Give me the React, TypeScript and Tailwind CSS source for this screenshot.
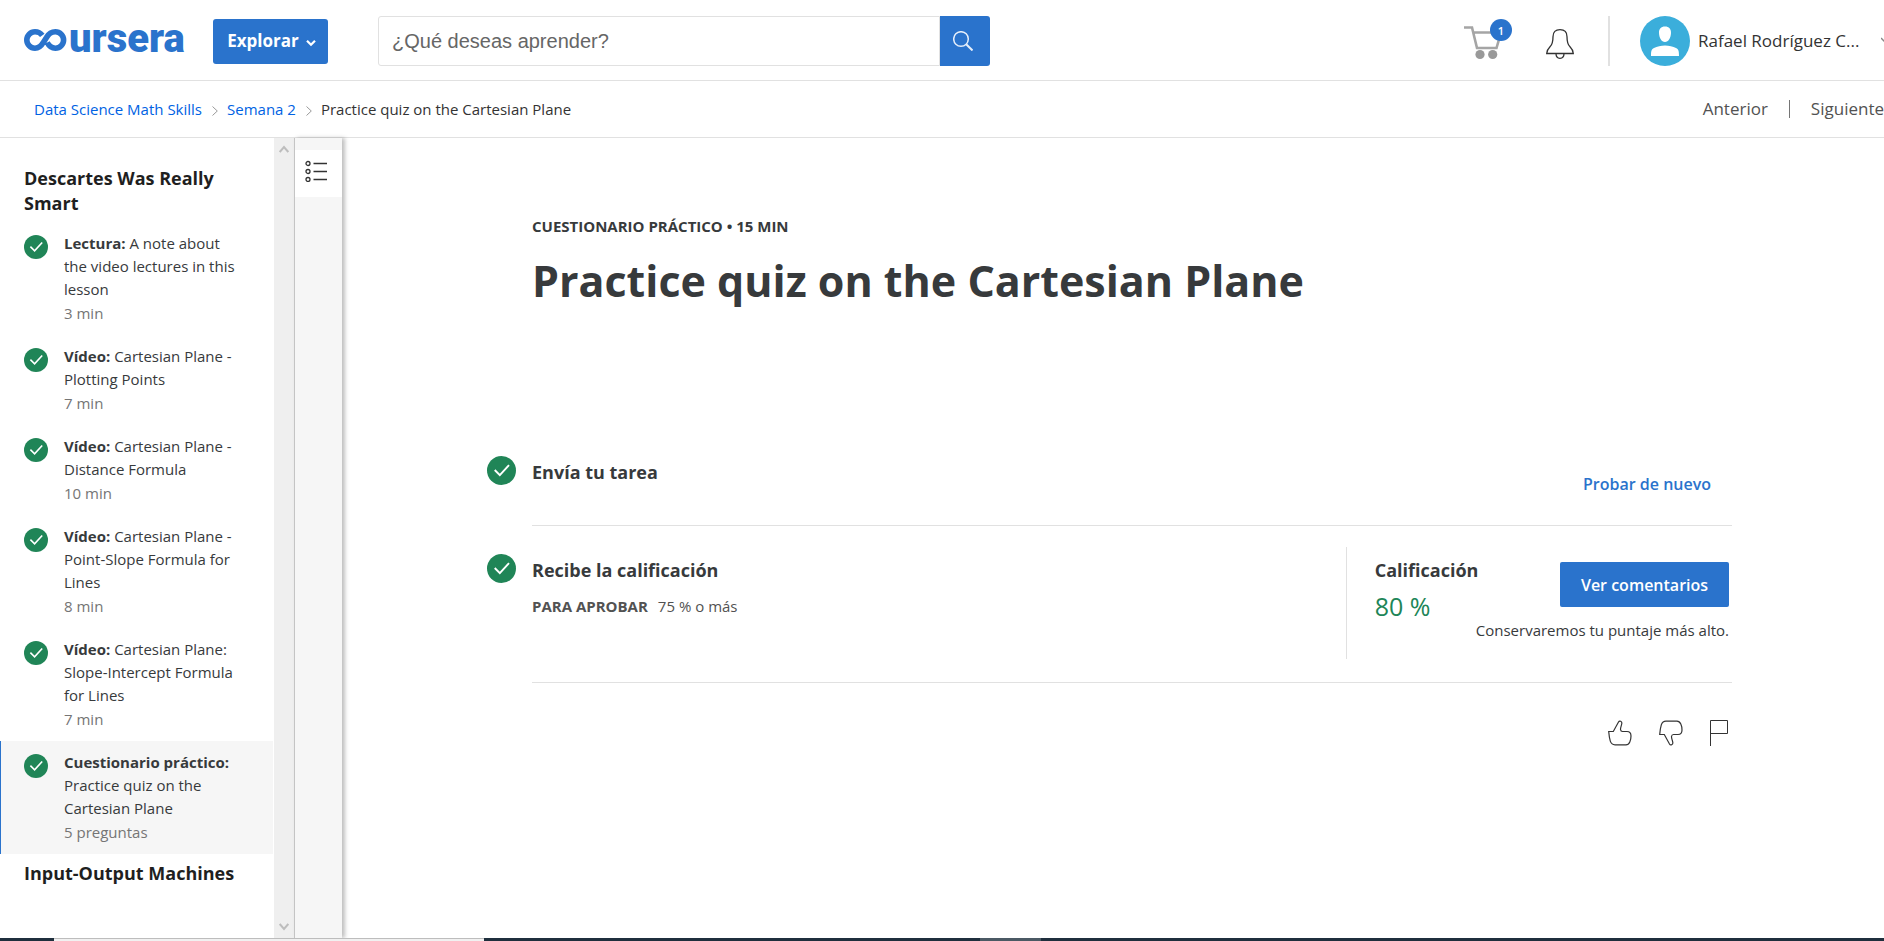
import React from "react";

type Lesson = { kind: string; title: string; meta: string; active?: boolean };

const lessons: Lesson[] = [
  { kind: "Lectura:", title: "A note about the video lectures in this lesson", meta: "3 min" },
  { kind: "Vídeo:", title: "Cartesian Plane - Plotting Points", meta: "7 min" },
  { kind: "Vídeo:", title: "Cartesian Plane - Distance Formula", meta: "10 min" },
  { kind: "Vídeo:", title: "Cartesian Plane - Point-Slope Formula for Lines", meta: "8 min" },
  { kind: "Vídeo:", title: "Cartesian Plane: Slope-Intercept Formula for Lines", meta: "7 min" },
  { kind: "Cuestionario práctico:", title: "Practice quiz on the Cartesian Plane", meta: "5 preguntas", active: true },
];

function Check({ className }: { className: string }) {
  return (
    <svg viewBox="0 0 24 24" className={className} aria-hidden="true">
      <circle cx="12" cy="12" r="12" fill="#208557" />
      <path d="M6.4 11.6l4.2 4.2 7.6-8.3" fill="none" stroke="#fff" strokeWidth="1.6" />
    </svg>
  );
}

function Logo() {
  return (
    <a href="#inicio" aria-label="Coursera" className="mb-[2px] flex h-10 w-[159px] shrink-0 items-center text-[#2a73cc]">
      <svg viewBox="0 0 45 22" className="h-[22px] w-[45px] shrink-0" aria-hidden="true">
        <path
          d="M18.300 6.400C16.500 4 14 2.800 11 2.800a8.200 8.200 0 0 0 0 16.400c4 0 6.300-2.200 8.500-6L22.500 8.500c2.100-3.700 4.800-5.700 8.900-5.700a8.200 8.200 0 0 1 0 16.400c-3.700 0-6.400-2-8.200-5.600"
          fill="none"
          stroke="currentColor"
          strokeWidth="5.600"
        />
      </svg>
      <span className="pb-[2px] font-['Roboto',sans-serif] text-[40px] leading-10 font-black">ursera</span>
    </a>
  );
}

function Header() {
  return (
    <header className="flex h-[81px] shrink-0 items-center border-b border-[#e1e1e1] pt-[2px] pl-6">
      <Logo />
      <button className="ml-[30px] flex h-[45px] w-[115px] shrink-0 items-center justify-center gap-[7px] rounded-[3px] bg-[#2a73cc] pl-[2px] text-[17px] font-bold text-white">
        Explorar
        <svg viewBox="0 0 10 8" className="mt-1 h-2 w-2.5" aria-hidden="true">
          <path d="M1 1.800l4 4 4-4" fill="none" stroke="currentColor" strokeWidth="2.200" />
        </svg>
      </button>
      <form className="ml-[50px] flex h-[50px] w-[612px] items-stretch" onSubmit={(e) => e.preventDefault()}>
        <input
          aria-label="Buscar cursos"
          placeholder="¿Qué deseas aprender?"
          className="min-w-0 flex-1 rounded-l-[3px] border border-[#e1e1e1] px-[13px] font-['Liberation_Sans',sans-serif] text-[20px] text-[#666] outline-none placeholder:text-[#666]"
        />
        <button aria-label="Buscar" className="flex w-[50px] items-center justify-center rounded-r-[3px] bg-[#2a73cc] text-[#e5eefa]">
          <svg viewBox="0 0 20 20" className="-ml-1 h-5 w-5" fill="none" stroke="currentColor" strokeWidth="1.500" aria-hidden="true">
            <circle cx="8" cy="8" r="7.300" />
            <path d="M13.200 13.200l6.300 6.300" strokeWidth="2" />
          </svg>
        </button>
      </form>
      <div className="ml-auto flex shrink-0 items-center">
        <a href="#carrito" aria-label="Carrito" className="relative block h-10 w-12">
          <svg viewBox="0 1 48 40" className="h-10 w-12" aria-hidden="true">
            <path d="M0 7.500h8l5 20.500h19.500l4.500-15.500H9" fill="none" stroke="#a5a5a5" strokeWidth="2.600" />
            <circle cx="16" cy="34.500" r="4.600" fill="#999" />
            <circle cx="28.700" cy="34.500" r="4.600" fill="#999" />
          </svg>
          <span className="absolute top-[-2px] right-0 flex h-[22px] w-[22px] items-center justify-center rounded-full bg-[#2a73cc] text-[11px] leading-none font-semibold text-white">
            1
          </span>
        </a>
        <button aria-label="Notificaciones" className="ml-[34px]">
          <svg viewBox="0 1 28 32" className="mt-2 h-8 w-7" fill="none" stroke="#333" strokeWidth="1.300" aria-hidden="true">
            <path d="M14 1.700c-4.500 0-7 2.600-7 7 0 4.500-.7 7.800-3 10.100C1.800 21 .7 22 .7 25.500h26.600c0-3.500-1.100-4.500-3.300-6.700-2.300-2.300-3-5.600-3-10.100 0-4.400-2.500-7-7-7z" />
            <path d="M10 25.500c0 3 1.500 4.800 4 4.800s4-1.800 4-4.800" />
          </svg>
        </button>
        <span className="ml-[34px] h-[50px] w-[2px] bg-[#e1e1e1]" />
        <button className="ml-[30px] flex items-center text-[17px] text-[#333]">
          <svg viewBox="0 0 50 50" className="h-[50px] w-[50px]" aria-hidden="true">
            <circle cx="25" cy="25" r="25" fill="#3baedb" />
            <path d="M25 10.500c4 0 6.200 2.600 6 6.500-.2 4.700-2.500 9-6 9s-5.800-4.300-6-9c-.2-3.900 2-6.500 6-6.500z" fill="#fff" />
            <path d="M11 40c0-5 .5-7 3-8 3-1.300 7-2.500 11-2.500s8 1.200 11 2.500c2.500 1 3 3 3 8z" fill="#fff" />
          </svg>
          <span className="ml-2 w-[183px] truncate text-left">Rafael Rodríguez C...</span>
          <span className="flex w-[3px] overflow-hidden">
            <svg viewBox="0 0 12 8" className="h-2 w-3 shrink-0" fill="none" stroke="#888" strokeWidth="1.500" aria-hidden="true">
              <path d="M0 1l6 6 6-6" />
            </svg>
          </span>
        </button>
      </div>
    </header>
  );
}

function Separator() {
  return (
    <svg viewBox="0 0 6 10" className="mr-[9px] ml-[10px] mt-1 h-[10px] w-[6px]" fill="none" stroke="#999" aria-hidden="true">
      <path d="M.5.500L5.300 5 .5 9.500" />
    </svg>
  );
}

function Breadcrumbs() {
  return (
    <div className="flex h-[57px] shrink-0 items-center justify-between border-b border-[#e1e1e1] pl-[34px]">
      <nav aria-label="Ruta" className="flex items-center text-[15px] text-[#333]">
        <a href="#curso" className="text-[#0062e3]">Data Science Math Skills</a>
        <Separator />
        <a href="#semana" className="text-[#0062e3]">Semana 2</a>
        <Separator />
        <span>Practice quiz on the Cartesian Plane</span>
      </nav>
      <nav aria-label="Navegación" className="flex items-center text-[17px] text-[#525252]">
        <a href="#anterior">Anterior</a>
        <span className="mx-[21px] h-[18px] w-px bg-[#757575]" />
        <a href="#siguiente">Siguiente</a>
      </nav>
    </div>
  );
}

function Sidebar() {
  return (
    <aside className="flex shrink-0">
      <div className="w-[274px] pt-7 pr-px">
        <h2 className="px-6 text-[18px] leading-[25px] font-bold text-[#1f1f1f]">Descartes Was Really Smart</h2>
        <ul className="mt-[6px]">
          {lessons.map((l) => (
            <li key={l.title}>
              <a
                href="#leccion"
                className={
                  l.active
                    ? "flex border-l border-[#2a73cc] bg-[#f6f6f6] pt-[10px] pr-8 pb-[11px] pl-[23px]"
                    : "flex border-l border-transparent pt-[10px] pr-8 pb-[11px] pl-[23px]"
                }
              >
                <Check className="mt-[3px] h-6 w-6 shrink-0" />
                <div className="ml-4 text-[15px]">
                  <p className="leading-[23px] text-[#373a3c]">
                    <strong className="font-bold">{l.kind}</strong> {l.title}
                  </p>
                  <p className="mt-px leading-[22px] text-[#757575]">{l.meta}</p>
                </div>
              </a>
            </li>
          ))}
        </ul>
        <h2 className="mt-[7px] px-6 text-[18px] leading-[25px] font-bold text-[#1f1f1f]">Input-Output Machines</h2>
      </div>
      <div className="flex w-[20px] flex-col items-center justify-between bg-[#efefef] py-[7px]">
        <svg viewBox="0 0 10 8" className="h-2 w-2.5" fill="none" stroke="#bdbdbd" strokeWidth="2" aria-hidden="true">
          <path d="M.7 7L5 2l4.300 5" />
        </svg>
        <svg viewBox="0 0 10 8" className="h-2 w-2.5" fill="none" stroke="#bdbdbd" strokeWidth="2" aria-hidden="true">
          <path d="M.7 1L5 6l4.300-5" />
        </svg>
      </div>
      <div className="w-[48px] border-l border-[#c4c4c4] bg-[#f6f6f6] pt-3 shadow-[3px_0_4px_rgba(0,0,0,0.25)]">
        <button aria-label="Mostrar lecciones" className="flex h-[47px] w-full items-center bg-white pl-[10px]">
          <svg viewBox="0 0 22 22" className="mb-[5px] h-[22px] w-[22px]" fill="none" stroke="#333" strokeWidth="1.300" aria-hidden="true">
            <circle cx="3" cy="3.500" r="2" />
            <circle cx="3" cy="11.500" r="2" />
            <circle cx="3" cy="19.500" r="2" />
            <path d="M8.500 3.500H22M8.500 11.500H22M8.500 19.500H22" />
          </svg>
        </button>
      </div>
    </aside>
  );
}

const thumb = "M.700 11.500h4.600L10.500 2c1-1.700 3.700-.7 3.300 1.500-.3 2-1.500 4.500-1.300 6 .2 1.500 1 2 2 2h4.500c2.500 0 4 2 4 4.500 0 4-1.500 8.800-5 8.800H7c-2.500 0-4-1.700-4.700-3.700C1.500 18.500 1 15 .700 11.500z";

function Main() {
  return (
    <main className="min-w-0 flex-1 pr-[152px] pl-[145px] text-[#373a3c]">
      <div className="pt-[76px] pl-[45px]">
        <p className="text-[15px] leading-6 font-bold">CUESTIONARIO PRÁCTICO • 15 MIN</p>
        <h1 className="mt-[13px] text-[43px] leading-[60px] font-bold">Practice quiz on the Cartesian Plane</h1>
      </div>

      <section className="mt-[145px] flex items-start">
        <Check className="h-[29px] w-[29px] shrink-0" />
        <div className="ml-4 flex h-[70px] flex-1 items-start justify-between border-b border-[#e1e1e1] pr-[21px]">
          <h2 className="mt-1 text-[18px] leading-6 font-bold">Envía tu tarea</h2>
          <button className="mt-4 text-[16px] leading-6 font-semibold text-[#2a73cc]">Probar de nuevo</button>
        </div>
      </section>

      <section className="flex items-start">
        <Check className="mt-7 h-[29px] w-[29px] shrink-0" />
        <div className="ml-4 flex flex-1 justify-between border-b border-[#e1e1e1] pt-[21px] pb-[23px]">
          <div className="pt-[11px]">
            <h2 className="text-[18px] leading-6 font-bold">Recibe la calificación</h2>
            <p className="mt-3 flex gap-[10px] text-[15px] leading-6 text-[#525252]">
              <strong className="font-bold">PARA APROBAR</strong>
              <span>75 % o más</span>
            </p>
          </div>
          <div className="flex h-[112px] border-l border-[#e1e1e1] pr-[3px] pl-7">
            <div className="w-[101px] pt-[11px]">
              <h3 className="text-[18px] leading-6 font-bold">Calificación</h3>
              <p className="mt-2 text-[25px] leading-8 text-[#208557]">80 %</p>
            </div>
            <div className="flex flex-col items-end pt-[15px]">
              <button className="h-[45px] w-[169px] rounded-[2px] bg-[#2a73cc] text-[16px] font-semibold text-white">Ver comentarios</button>
              <p className="mt-[11px] text-[15px] leading-6 text-[#373a3c]">Conservaremos tu puntaje más alto.</p>
            </div>
          </div>
        </div>
      </section>

      <div className="mt-[37px] flex justify-end gap-[27px] pr-1">
        <button aria-label="Me gusta">
          <svg viewBox="0 0 24 26" className="h-[26px] w-6" fill="none" stroke="#333" strokeWidth="1.200" aria-hidden="true">
            <path d={thumb} />
          </svg>
        </button>
        <button aria-label="No me gusta">
          <svg viewBox="0 0 24 26" className="h-[26px] w-6" fill="none" stroke="#333" strokeWidth="1.200" aria-hidden="true">
            <g transform="matrix(1 0 0 -1 0 26)">
              <path d={thumb} />
            </g>
          </svg>
        </button>
        <button aria-label="Informar de un problema">
          <svg viewBox="0 0 18 26" className="h-[26px] w-[18px]" fill="none" stroke="#333" aria-hidden="true">
            <path d="M.5 26V.500h17v13H.5" />
          </svg>
        </button>
      </div>
    </main>
  );
}

export default function App() {
  return (
    <div className="flex min-h-screen flex-col overflow-hidden bg-white font-['Open_Sans',sans-serif] text-[#333]">
      <Header />
      <Breadcrumbs />
      <div className="flex flex-1">
        <Sidebar />
        <Main />
      </div>
      <footer className="flex h-[3px] shrink-0 bg-[#1f2f3d]">
        <span className="ml-[54px] w-[430px] border-t border-[#bdbdbd] bg-[#f1f1f1]" />
        <span className="ml-[496px] w-[61px] bg-[#4b5964]" />
      </footer>
    </div>
  );
}
